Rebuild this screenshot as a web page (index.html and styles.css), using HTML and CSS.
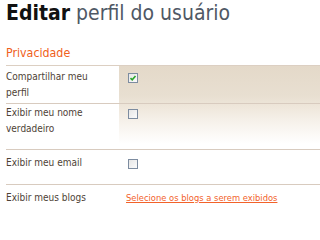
FILE: index.html
```html
<!DOCTYPE html>
<html lang="pt">
<head>
<meta charset="utf-8">
<link rel="stylesheet" href="styles.css">
</head>
<body>
<div class="page">
  <h1 class="title"><b>Editar</b> perfil do usuário</h1>
  <h2 class="section">Privacidade</h2>
  <div class="rows">
    <div class="row r1">
      <div class="label">Compartilhar meu perfil</div>
      <div class="value"><span class="cb checked"><svg viewBox="0 0 8 8" width="8" height="8"><path d="M1.5 4.2 L3.2 5.8 L6.5 2" fill="none" stroke="#2aa52a" stroke-width="1.6"/></svg></span></div>
    </div>
    <div class="row r2">
      <div class="label">Exibir meu nome verdadeiro</div>
      <div class="value"><span class="cb"></span></div>
    </div>
    <div class="row r3">
      <div class="label">Exibir meu email</div>
      <div class="value"><span class="cb"></span></div>
    </div>
    <div class="row r4">
      <div class="label">Exibir meus blogs</div>
      <div class="value"><a class="link" href="#">Selecione os blogs a serem exibidos</a></div>
    </div>
  </div>
</div>
</body>
</html>
```
FILE: styles.css
```css
html, body { margin: 0; padding: 0; background: #fff; }
body { font-family: "DejaVu Sans Condensed", "DejaVu Sans", sans-serif; }
.page { padding-left: 6px; }
.title {
  margin: 0;
  padding-top: 1px;
  font-size: 21px;
  line-height: 24px;
  font-weight: normal;
  color: #4f5865;
}
.title b { color: #111; font-weight: bold; }
.section {
  margin: 0;
  padding-top: 21px;
  padding-bottom: 5px;
  font-size: 12.3px;
  line-height: 14px;
  font-weight: normal;
  color: #f06020;
  border-bottom: 1px solid #dccfc2;
}
.rows {
  background: linear-gradient(to bottom, #e4d9c9 0px, #e8dfd1 30px, #eee6da 40px, #f6f1ea 55px, #ffffff 78px) no-repeat;
  background-position: 113px 0;
  background-size: calc(100% - 113px) 80px;
}
.row {
  display: grid;
  grid-template-columns: 113px 1fr;
  border-bottom: 1px solid #d8cbbf;
  font-size: 10px;
  line-height: 16px;
  color: #4e4236;
}
.r1 { padding: 3px 0 2px; }
.r2 { padding: 1px 0 12px; }
.r3 { padding: 5px 0 13px; }
.r4 { padding: 5px 0 0; border-bottom: none; align-items: baseline; }
.label { padding-right: 12px; }
.value { padding-left: 9px; }
.cb {
  display: inline-block;
  width: 8px;
  height: 8px;
  border: 1px solid #7d8ca0;
  background: linear-gradient(135deg, #e6e6e6, #fbfbfb);
  margin-top: 4px;
  vertical-align: top;
  position: relative;
}
.cb svg { position: absolute; left: 0; top: 0; }
.r4 .value { padding-left: 7px; }
.link { color: #f2622a; text-decoration: underline; font-size: 9.3px; }
```
